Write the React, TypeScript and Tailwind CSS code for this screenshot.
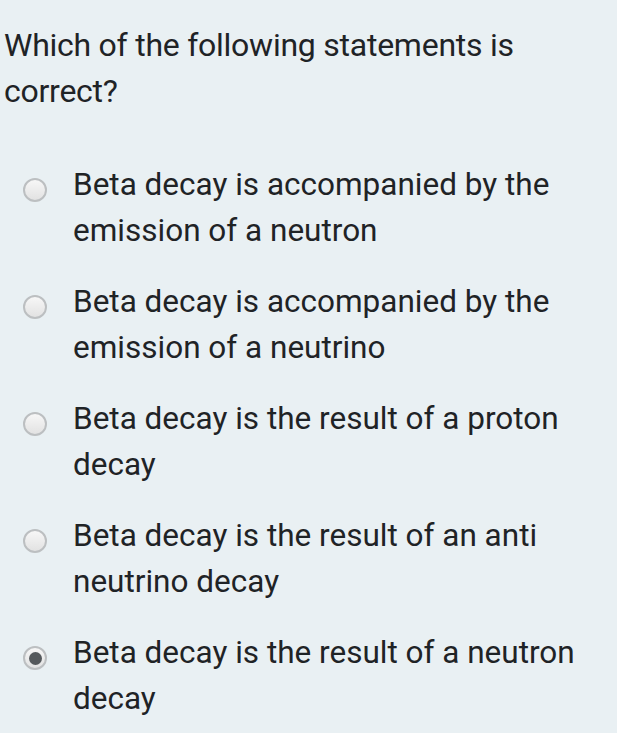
const OPTIONS = [
  { text: 'Beta decay is accompanied by the emission of a neutron', checked: false },
  { text: 'Beta decay is accompanied by the emission of a neutrino', checked: false },
  { text: 'Beta decay is the result of a proton decay', checked: false },
  { text: 'Beta decay is the result of an anti neutrino decay', checked: false },
  { text: 'Beta decay is the result of a neutron decay', checked: true },
];

function Radio({ checked }: { checked: boolean }) {
  return (
    <div className="w-[24px] h-[24px] rounded-full border-2 border-[#bcbfc1] bg-gradient-to-b from-[#f7f7f7] to-[#e2e2e2] flex items-center justify-center">
      {checked && <div className="w-[13px] h-[13px] rounded-full bg-[#55595c]" />}
    </div>
  );
}

export default function App() {
  return (
    <main
      className="min-h-[733px] w-[617px] bg-[#e9f0f3] text-[#1f2326] pt-[22px]"
      style={{ fontFamily: 'Roboto, "Noto Sans", sans-serif' }}
    >
      <h1 className="pl-[4px] pr-[40px] text-[32px] leading-[46px] tracking-[-0.25px] font-normal">
        Which of the following statements is correct?
      </h1>
      <ul className="mt-[48px] flex flex-col gap-[25px]">
        {OPTIONS.map((o) => (
          <li key={o.text} className="flex items-start">
            <div className="w-[73px] shrink-0 pl-[23px] pt-[16px]">
              <Radio checked={o.checked} />
            </div>
            <div className="w-[522px] text-[31.5px] leading-[46px]">{o.text}</div>
          </li>
        ))}
      </ul>
    </main>
  );
}
